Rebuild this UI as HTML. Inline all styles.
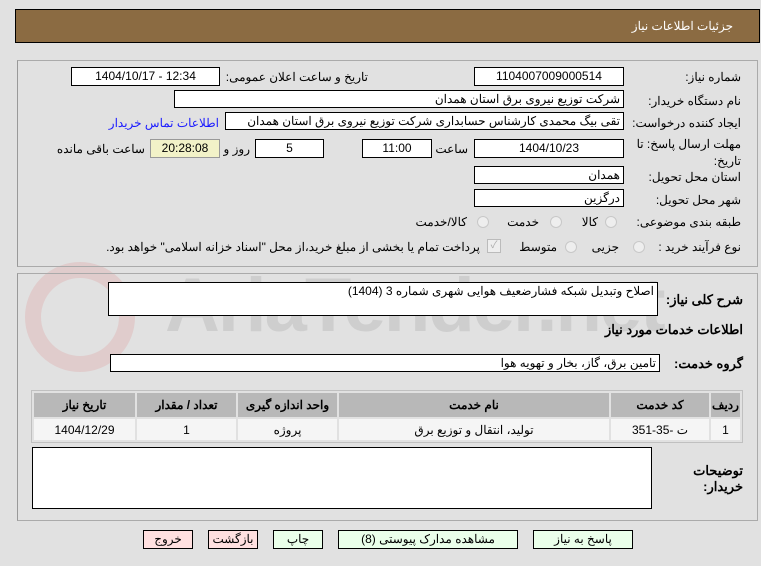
<!DOCTYPE html>
<html><head><meta charset="utf-8"><style>
body{margin:0;width:761px;height:566px;background:#e1e1e1;font-family:Tahoma,"Liberation Sans","Noto Sans CJK SC",sans-serif;font-size:12px;color:#000;position:relative;overflow:hidden}
.a{position:absolute;white-space:nowrap}
.box{position:absolute;background:#fff;border:1px solid #000;box-sizing:border-box;text-align:center;line-height:17px;overflow:hidden;white-space:nowrap}
.r{text-align:right;padding-right:3px}
.lbl{position:absolute;white-space:nowrap;direction:rtl;text-align:right}
.panel{position:absolute;border:1px solid #aaa;border-left-color:#999}
.rad{position:absolute;width:12px;height:12px;border-radius:50%;border:1px solid #c8c8c8;background:#eee;box-sizing:border-box}
table{position:absolute;border-collapse:separate;border-spacing:2px;background:#e1e1e1;border:1px solid #c0c0c0}
td{text-align:center;font-size:12px}
th{background:#b8b8b8;font-size:12px;height:22px}
.btn{position:absolute;border:1px solid #000;box-sizing:border-box;text-align:center;line-height:17px;height:19px}
</style></head><body>
<div class="a" style="left:15px;top:9px;width:745px;height:34px;background:#8b6b42;border:1px solid #000;box-sizing:border-box"></div>
<div class="lbl" style="right:28px;top:19px;color:#fff">جزئیات اطلاعات نیاز</div>

<div class="a" style="left:165px;top:262px;font-size:76px;font-weight:bold;color:rgba(120,120,120,0.18);letter-spacing:-2px;font-family:'Liberation Sans',sans-serif">AriaTender.net</div>
<div class="a" style="left:25px;top:262px;width:110px;height:110px;border-radius:50%;border:16px solid rgba(220,120,120,0.2);box-sizing:border-box"></div>

<div class="panel" style="left:17px;top:60px;width:739px;height:205px"></div>
<div class="panel" style="left:17px;top:273px;width:739px;height:246px"></div>

<div class="lbl" style="right:20px;top:70px">شماره نیاز:</div>
<div class="box" style="left:474px;top:67px;width:150px;height:19px">1104007009000514</div>
<div class="lbl" style="right:393px;top:70px">تاریخ و ساعت اعلان عمومی:</div>
<div class="box" style="left:71px;top:67px;width:149px;height:19px">1404/10/17 - 12:34</div>

<div class="lbl" style="right:20px;top:94px">نام دستگاه خریدار:</div>
<div class="box r" style="left:174px;top:90px;width:450px;height:18px;direction:rtl">شرکت توزیع نیروی برق استان همدان</div>

<div class="lbl" style="right:20px;top:116px">ایجاد کننده درخواست:</div>
<div class="box r" style="left:225px;top:112px;width:399px;height:18px;direction:rtl">تقی بیگ محمدی کارشناس حسابداری شرکت توزیع نیروی برق استان همدان</div>
<div class="lbl" style="right:542px;top:116px;color:#1a1aff">اطلاعات تماس خریدار</div>

<div class="lbl" style="right:20px;top:136px;line-height:17px">مهلت ارسال پاسخ: تا<br>تاریخ:</div>
<div class="box" style="left:474px;top:139px;width:150px;height:19px">1404/10/23</div>
<div class="lbl" style="right:293px;top:142px">ساعت</div>
<div class="box" style="left:362px;top:139px;width:70px;height:19px">11:00</div>
<div class="box" style="left:255px;top:139px;width:69px;height:19px">5</div>
<div class="lbl" style="right:511px;top:142px">روز و</div>
<div class="box" style="left:150px;top:139px;width:70px;height:19px;background:#f2f2c8;border-color:#999">20:28:08</div>
<div class="lbl" style="right:616px;top:142px">ساعت باقی مانده</div>

<div class="lbl" style="right:20px;top:170px">استان محل تحویل:</div>
<div class="box r" style="left:474px;top:166px;width:150px;height:18px;direction:rtl">همدان</div>
<div class="lbl" style="right:20px;top:193px">شهر محل تحویل:</div>
<div class="box r" style="left:474px;top:189px;width:150px;height:18px;direction:rtl">درگزین</div>

<div class="lbl" style="right:20px;top:215px">طبقه بندی موضوعی:</div>
<div class="rad" style="left:605px;top:216px"></div><div class="lbl" style="right:163px;top:215px">کالا</div>
<div class="rad" style="left:550px;top:216px"></div><div class="lbl" style="right:222px;top:215px">خدمت</div>
<div class="rad" style="left:477px;top:216px"></div><div class="lbl" style="right:294px;top:215px">کالا/خدمت</div>

<div class="lbl" style="right:20px;top:240px">نوع فرآیند خرید :</div>
<div class="rad" style="left:633px;top:241px"></div><div class="lbl" style="right:142px;top:240px">جزیی</div>
<div class="rad" style="left:565px;top:241px"></div><div class="lbl" style="right:204px;top:240px">متوسط</div>
<div class="a" style="left:487px;top:239px;width:12px;height:12px;border:1px solid #bbb;background:#eee;font-size:10px;line-height:12px;text-align:center;color:#aaa">✓</div>
<div class="lbl" style="right:281px;top:240px">پرداخت تمام یا بخشی از مبلغ خرید،از محل "اسناد خزانه اسلامی" خواهد بود.</div>

<div class="lbl" style="right:18px;top:292px;font-weight:bold;font-size:13px">شرح کلی نیاز:</div>
<div class="box r" style="left:108px;top:282px;width:550px;height:34px;direction:rtl;text-align:right">اصلاح وتبدیل شبکه فشارضعیف هوایی شهری شماره 3 (1404)</div>
<div class="lbl" style="right:18px;top:322px;font-weight:bold;font-size:13px">اطلاعات خدمات مورد نیاز</div>
<div class="lbl" style="right:18px;top:356px;font-weight:bold;font-size:13px">گروه خدمت:</div>
<div class="box r" style="left:110px;top:354px;width:550px;height:18px;direction:rtl">تامین برق، گاز، بخار و تهویه هوا</div>

<table style="left:31px;top:390px;width:712px" dir="rtl">
<tr><th style="width:27px">ردیف</th><th style="width:96px">کد خدمت</th><th>نام خدمت</th><th style="width:97px">واحد اندازه گیری</th><th style="width:97px">تعداد / مقدار</th><th style="width:99px">تاریخ نیاز</th></tr>
<tr style="background:#f5f5f5;height:21px"><td>1</td><td>ت -35-351</td><td>تولید، انتقال و توزیع برق</td><td>پروژه</td><td>1</td><td>1404/12/29</td></tr>
</table>

<div class="box" style="left:32px;top:447px;width:620px;height:62px"></div>
<div class="lbl" style="right:18px;top:463px;font-weight:bold;font-size:13px;line-height:16px">توضیحات<br>خریدار:</div>

<div class="btn" style="left:143px;top:530px;width:50px;background:#ffe0e0">خروج</div>
<div class="btn" style="left:208px;top:530px;width:50px;background:#ffe0e0">بازگشت</div>
<div class="btn" style="left:273px;top:530px;width:50px;background:#eaffea">چاپ</div>
<div class="btn" style="left:338px;top:530px;width:180px;background:#eaffea">مشاهده مدارک پیوستی (8)</div>
<div class="btn" style="left:533px;top:530px;width:100px;background:#eaffea">پاسخ به نیاز</div>
</body></html>
